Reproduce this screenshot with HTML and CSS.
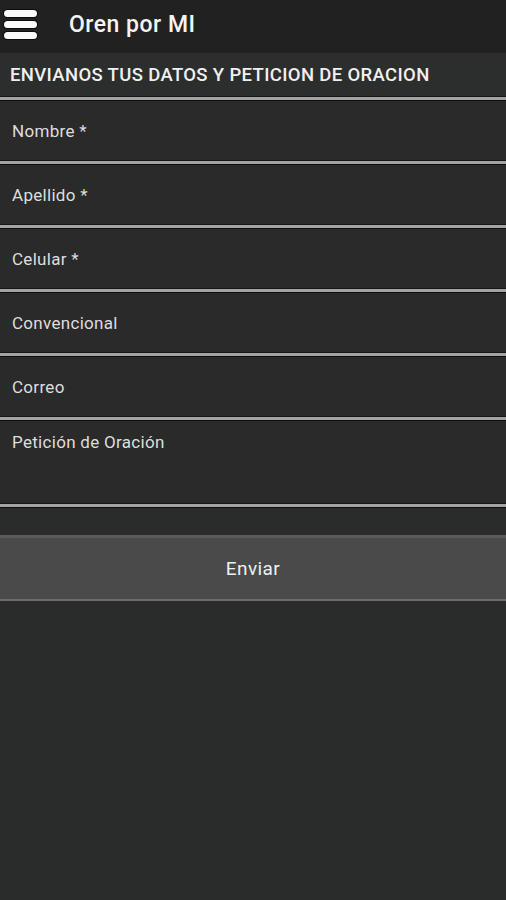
FILE: index.html
```html
<!DOCTYPE html>
<html lang="es">
<head>
    <meta charset="UTF-8">
    <meta name="viewport" content="width=device-width, initial-scale=1.0">
    <title>Oren por MI</title>
    <link rel="stylesheet" href="styles.css">
</head>
<body>
    <header class="app-bar">
        <button class="menu-btn" aria-label="Menu">
            <span class="bar"></span>
            <span class="bar"></span>
            <span class="bar"></span>
        </button>
        <h1>Oren por MI</h1>
    </header>

    <div class="section-title">ENVIANOS TUS DATOS Y PETICION DE ORACION</div>

    <form class="prayer-form" onsubmit="return false">
        <div class="divider"></div>
        <input class="field" type="text" placeholder="Nombre *">
        <div class="divider"></div>
        <input class="field" type="text" placeholder="Apellido *">
        <div class="divider"></div>
        <input class="field" type="tel" placeholder="Celular *">
        <div class="divider"></div>
        <input class="field" type="tel" placeholder="Convencional">
        <div class="divider"></div>
        <input class="field" type="email" placeholder="Correo">
        <div class="divider"></div>
        <textarea class="field field-area" placeholder="Petición de Oración"></textarea>
        <div class="divider"></div>

        <button class="send-btn" type="submit">Enviar</button>
    </form>
</body>
</html>
```

FILE: styles.css
```css
body {
    margin: 0;
    font-family: Roboto, "Liberation Sans", sans-serif;
    background-color: #2a2b2b;
    color: #e6e6e6;
    min-height: 100vh;
}

.app-bar {
    display: flex;
    align-items: center;
    height: 53px;
    box-sizing: border-box;
    padding-bottom: 5px;
    background-color: #212121;
}

.menu-btn {
    display: flex;
    flex-direction: column;
    gap: 4px;
    width: 33px;
    margin: 0 32px 0 4px;
    padding: 0;
    background: none;
    border: none;
    cursor: pointer;
}

.bar {
    display: block;
    height: 7px;
    border-radius: 4px;
    background-color: #fafafa;
    box-shadow: 0 0 0 1px #0c0c0c;
}

.app-bar h1 {
    margin: 0;
    font-size: 23px;
    font-weight: 500;
    letter-spacing: 0.5px;
    color: #f5f5f5;
}

.section-title {
    height: 43px;
    line-height: 45px;
    padding-left: 10px;
    background-color: #2c2d2d;
    font-size: 18.5px;
    font-weight: 500;
    letter-spacing: 0.35px;
    color: #f0f0f0;
}

.prayer-form {
    display: flex;
    flex-direction: column;
}

.divider {
    height: 3px;
    background-color: #a3a3a3;
    border-top: 1px solid #161616;
    border-bottom: 1px solid #0e0e0e;
}

.field {
    height: 59px;
    box-sizing: border-box;
    margin: 0;
    padding: 0 12px;
    border: none;
    outline: none;
    background-color: #2a2a2a;
    color: #e6e6e6;
    font-family: inherit;
    font-size: 17px;
    letter-spacing: 0.3px;
}

.field::placeholder {
    color: #dedede;
}

.field-area {
    height: 82px;
    padding-top: 11px;
    resize: none;
}

.send-btn {
    margin-top: 27px;
    height: 66px;
    background-color: #4a4a4a;
    border: none;
    border-top: 3px solid #5a5a5a;
    border-bottom: 2px solid #6c6c6c;
    color: #f0f0f0;
    font-family: inherit;
    font-size: 19px;
    letter-spacing: 0.4px;
    cursor: pointer;
}
```
